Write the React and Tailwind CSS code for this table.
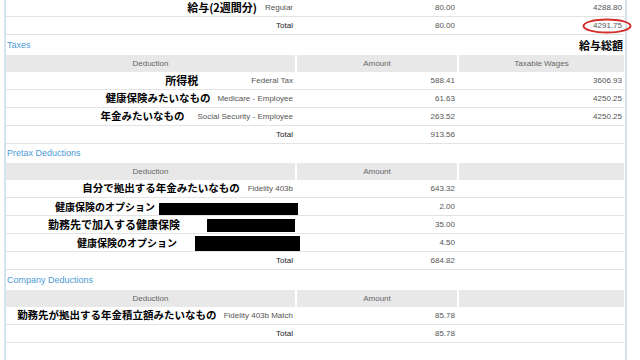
const jpFont = { fontFamily: '"Noto Sans CJK JP", "Noto Sans", sans-serif' };

const Row = ({ jp, jpClass = "", label, amount, wages, box, boxClass = "", total }) => (
  <div className="grid grid-cols-[289px_160px_165px] gap-x-[2px] h-[18px] border-b border-[#e3e3e3] items-center">
    <div className="flex items-center justify-end pr-[2px] h-full">
      {jp && (
        <span className={`font-bold text-black leading-none whitespace-nowrap font-['Noto_Sans_CJK_JP',sans-serif] ${jpClass}`}>
          {jp}
        </span>
      )}
      {box ? (
        <div className={`bg-black ${boxClass}`} />
      ) : (
        <span className={`text-[8px] leading-none whitespace-nowrap ${total ? "text-[#222]" : "text-[#555]"}`}>
          {label}
        </span>
      )}
    </div>
    <div className="text-right pr-[2px] text-[8px] text-[#555] leading-none">{amount}</div>
    <div className="text-right pr-[2px] text-[8px] text-[#555] leading-none">{wages}</div>
  </div>
);

const Header = ({ wages }) => (
  <div className="grid grid-cols-[289px_160px_165px] gap-x-[2px] h-[17px] text-[8px] text-[#666] leading-none">
    <div className="bg-[#e8e8e8] flex items-center justify-center">Deduction</div>
    <div className="bg-[#e8e8e8] flex items-center justify-center">Amount</div>
    <div className="bg-[#e8e8e8] flex items-center justify-center">{wages}</div>
  </div>
);

const Title = ({ children, right, h }) => (
  <div className={`flex items-center justify-between pl-[1px] pr-[1px] ${h}`}>
    <span className="text-[9px] text-[#4d9ad6] leading-none">{children}</span>
    {right}
  </div>
);

export default function App() {
  return (
    <div className="relative w-[640px] h-[360px] overflow-hidden bg-white font-['Liberation_Sans',Arial,sans-serif]">
      <div className="flex h-full">
        <div className="w-[4px]" />
        <div className="w-[2px] bg-[#d4e4ee]" />
        <div className="w-[618px] -mt-[1px]">
          <Row jp="給与(2週間分)" jpClass="text-[11px] mr-[8px]" label="Regular" amount="80.00" wages="4288.80" />
          <Row label="Total" total amount="80.00" wages="4291.75" />

          <Title
            h="h-[20px]"
            right={<span style={jpFont} className="text-[11px] font-bold text-black leading-none">給与総額</span>}
          >
            Taxes
          </Title>
          <Header wages="Taxable Wages" />
          <Row jp="所得税" jpClass="text-[11px] mr-[53px]" label="Federal Tax" amount="588.41" wages="3606.93" />
          <Row jp="健康保険みたいなもの" jpClass="text-[10.5px] mr-[7px]" label="Medicare - Employee" amount="61.63" wages="4250.25" />
          <Row jp="年金みたいなもの" jpClass="text-[10.5px] mr-[13px]" label="Social Security - Employee" amount="263.52" wages="4250.25" />
          <Row label="Total" total amount="913.56" />

          <Title h="h-[19px]">Pretax Deductions</Title>
          <Header />
          <Row jp="自分で拠出する年金みたいなもの" jpClass="text-[10.5px] mr-[8px]" label="Fidelity 403b" amount="643.32" />
          <Row jp="健康保険のオプション" jpClass="text-[10px] mr-[4px]" box boxClass="w-[139px] h-[12px] -mr-[5px] mt-[4px]" amount="2.00" />
          <Row jp="勤務先で加入する健康保険" jpClass="text-[11px] mr-[27px]" box boxClass="w-[88px] h-[13px] -mr-[2px] mt-[2px]" amount="35.00" />
          <Row jp="健康保険のオプション" jpClass="text-[10px] mr-[18px]" box boxClass="w-[105px] h-[15px] -mr-[7px] mt-[2px]" amount="4.50" />
          <Row label="Total" total amount="684.82" />

          <Title h="h-[20px]">Company Deductions</Title>
          <Header />
          <Row jp="勤務先が拠出する年金積立額みたいなもの" jpClass="text-[10.5px] mr-[7px]" label="Fidelity 403b Match" amount="85.78" />
          <Row label="Total" total amount="85.78" />
        </div>
        <div className="w-[1px]" />
        <div className="w-[2px] bg-[#d4e4ee]" />
      </div>

      <svg className="absolute left-[582px] top-[18px]" width="50" height="16" viewBox="0 0 50 16">
        <ellipse cx="25" cy="8" rx="23.5" ry="6.5" fill="none" stroke="#d42f2b" strokeWidth="2" />
      </svg>
    </div>
  );
}
